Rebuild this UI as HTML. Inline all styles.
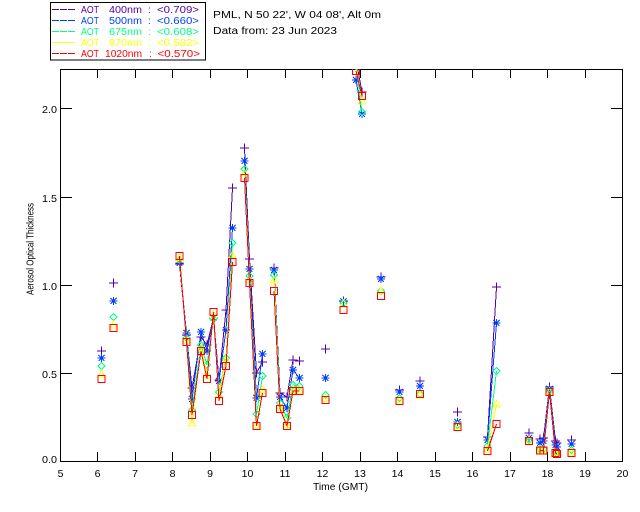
<!DOCTYPE html>
<html><head><meta charset="utf-8">
<style>
html,body{margin:0;padding:0;background:#fff;width:640px;height:512px;overflow:hidden}
svg{display:block;position:absolute;left:0;top:0}
text{font-family:"Liberation Sans",sans-serif;font-size:10px;fill:#000}
.x text{font-size:10.5px}
.d{fill:none;shape-rendering:crispEdges;stroke-width:1}
</style></head><body>
<svg width="640" height="512" viewBox="0 0 640 512">
<defs>
<clipPath id="c"><rect x="60" y="69" width="563" height="393"/></clipPath>
<marker id="mp" markerUnits="userSpaceOnUse" markerWidth="12" markerHeight="12" refX="6" refY="6" viewBox="0 0 12 12"><path d="M1.5 6H10.5M6 1.5V10.5" fill="none" stroke="#5500a0" shape-rendering="crispEdges"/></marker>
<marker id="ms" markerUnits="userSpaceOnUse" markerWidth="12" markerHeight="12" refX="6" refY="6" viewBox="0 0 12 12"><path d="M2 6H10M6 2V10M3 3L9 9M3 9L9 3" fill="none" stroke="#0040ff" shape-rendering="crispEdges"/></marker>
<marker id="md" markerUnits="userSpaceOnUse" markerWidth="12" markerHeight="12" refX="6" refY="6" viewBox="0 0 12 12"><path d="M6 2.5L9.5 6L6 9.5L2.5 6Z" fill="none" stroke="#00ff88" shape-rendering="crispEdges"/></marker>
<marker id="mt" markerUnits="userSpaceOnUse" markerWidth="12" markerHeight="12" refX="6" refY="6" viewBox="0 0 12 12"><path d="M6 2L9.5 9H2.5Z" fill="none" stroke="#ffff00" shape-rendering="crispEdges"/></marker>
<marker id="mr" markerUnits="userSpaceOnUse" markerWidth="12" markerHeight="12" refX="6" refY="6" viewBox="0 0 12 12"><rect x="2.5" y="2.5" width="7" height="7" fill="none" stroke="#ff0000" shape-rendering="crispEdges"/></marker>
</defs>

<!-- legend -->
<rect x="50.5" y="2.5" width="155" height="57.5" fill="#fff" stroke="#000" shape-rendering="crispEdges"/>
<g shape-rendering="crispEdges" stroke-dasharray="7 1" fill="none">
<path d="M52 9.5H75" stroke="#5500a0"/>
<path d="M52 20.5H75" stroke="#0040ff"/>
<path d="M52 31.5H75" stroke="#00ff88"/>
<path d="M52 42.5H75" stroke="#ffff00"/>
<path d="M52 53.5H75" stroke="#ff0000"/>
</g>
<g style="fill:#5500a0"><text style="fill:inherit" x="81" y="13" textLength="18" lengthAdjust="spacingAndGlyphs">AOT</text><text style="fill:inherit" x="109" y="13" textLength="33" lengthAdjust="spacingAndGlyphs">400nm</text><text style="fill:inherit" x="148" y="13">:</text><text style="fill:inherit" x="157" y="13" textLength="42" lengthAdjust="spacingAndGlyphs">&lt;0.709&gt;</text></g>
<g style="fill:#0040ff"><text style="fill:inherit" x="81" y="24" textLength="18" lengthAdjust="spacingAndGlyphs">AOT</text><text style="fill:inherit" x="109" y="24" textLength="33" lengthAdjust="spacingAndGlyphs">500nm</text><text style="fill:inherit" x="148" y="24">:</text><text style="fill:inherit" x="157" y="24" textLength="42" lengthAdjust="spacingAndGlyphs">&lt;0.660&gt;</text></g>
<g style="fill:#00ff88"><text style="fill:inherit" x="81" y="35" textLength="18" lengthAdjust="spacingAndGlyphs">AOT</text><text style="fill:inherit" x="109" y="35" textLength="33" lengthAdjust="spacingAndGlyphs">675nm</text><text style="fill:inherit" x="148" y="35">:</text><text style="fill:inherit" x="157" y="35" textLength="42" lengthAdjust="spacingAndGlyphs">&lt;0.608&gt;</text></g>
<g style="fill:#ffff00"><text style="fill:inherit" x="81" y="46" textLength="18" lengthAdjust="spacingAndGlyphs">AOT</text><text style="fill:inherit" x="109" y="46" textLength="33" lengthAdjust="spacingAndGlyphs">870nm</text><text style="fill:inherit" x="148" y="46">:</text><text style="fill:inherit" x="157" y="46" textLength="42" lengthAdjust="spacingAndGlyphs">&lt;0.582&gt;</text></g>
<g style="fill:#ff0000"><text style="fill:inherit" x="81" y="57" textLength="18" lengthAdjust="spacingAndGlyphs">AOT</text><text style="fill:inherit" x="105" y="57" textLength="37" lengthAdjust="spacingAndGlyphs">1020nm</text><text style="fill:inherit" x="149" y="57">:</text><text style="fill:inherit" x="157.5" y="57" textLength="42.5" lengthAdjust="spacingAndGlyphs">&lt;0.570&gt;</text></g>

<!-- header -->
<text x="213" y="18" textLength="168" lengthAdjust="spacingAndGlyphs">PML, N 50 22', W 04 08', Alt 0m</text>
<text x="213" y="34" textLength="124" lengthAdjust="spacingAndGlyphs">Data from: 23 Jun 2023</text>

<!-- axes -->
<g fill="none" stroke="#000" shape-rendering="crispEdges">
<rect x="60.5" y="69.5" width="562" height="392"/>
<path d="M97.5 70v8M135.5 70v8M172.5 70v8M210.5 70v8M247.5 70v8M285.5 70v8M322.5 70v8M360.5 70v8M397.5 70v8M435.5 70v8M472.5 70v8M510.5 70v8M547.5 70v8M585.5 70v8"/>
<path d="M97.5 461v-9M135.5 461v-9M172.5 461v-9M210.5 461v-9M247.5 461v-9M285.5 461v-9M322.5 461v-9M360.5 461v-9M397.5 461v-9M435.5 461v-9M472.5 461v-9M510.5 461v-9M547.5 461v-9M585.5 461v-9"/>
<path d="M61 108.5h11M61 197.5h11M61 285.5h11M61 373.5h11"/>
<path d="M622 108.5h-11M622 197.5h-11M622 285.5h-11M622 373.5h-11"/>
</g>

<!-- y labels -->
<g class="x">
<text x="42" y="113" textLength="15" lengthAdjust="spacingAndGlyphs">2.0</text>
<text x="42" y="202" textLength="15" lengthAdjust="spacingAndGlyphs">1.5</text>
<text x="42" y="290" textLength="15" lengthAdjust="spacingAndGlyphs">1.0</text>
<text x="42" y="378" textLength="15" lengthAdjust="spacingAndGlyphs">0.5</text>
<text x="42" y="463" textLength="15" lengthAdjust="spacingAndGlyphs">0.0</text>
</g>
<text transform="translate(33.5,249) rotate(-90)" text-anchor="middle" textLength="92" lengthAdjust="spacingAndGlyphs">Aerosol Optical Thickness</text>

<!-- x labels -->
<g class="x" text-anchor="middle">
<text x="60.5" y="477">5</text><text x="97.5" y="477">6</text><text x="135" y="477">7</text><text x="172.5" y="477">8</text><text x="210" y="477">9</text><text x="247.5" y="477">10</text><text x="285" y="477">11</text><text x="322.5" y="477">12</text><text x="360" y="477">13</text><text x="397.5" y="477">14</text><text x="435" y="477">15</text><text x="472.5" y="477">16</text><text x="510" y="477">17</text><text x="547.5" y="477">18</text><text x="585" y="477">19</text><text x="622.5" y="477">20</text>
</g>
<text x="313" y="490" textLength="55" lengthAdjust="spacingAndGlyphs">Time (GMT)</text>

<!-- data -->
<g clip-path="url(#c)">
<path class="d" stroke="#5500a0" marker-start="url(#mp)" marker-mid="url(#mp)" marker-end="url(#mp)" d="M101.5 351M113.5 283M179.5 264L186.5 335L192 388L201 337L207 345L213.5 318L219 380L226 310L232.5 188M244.5 148L249.5 259L256.5 373L262.5 362M274 268L280 393L287 397L293 360L299.5 361M325.5 349M343.5 301M356 60L362 92M381 277M399.5 390M420 381M457.5 412M487.5 437L496.5 287M529 433M540 439L543.5 438L549.5 387L555.5 441L557 443M571.5 440"/>
<path class="d" stroke="#0040ff" marker-start="url(#ms)" marker-mid="url(#ms)" marker-end="url(#ms)" d="M101.5 358M113.5 301M179.5 263L186.5 333L192 399L201 332L207 351L213.5 318L219 381L226 330L232.5 228M244.5 161L249.5 269L256.5 398L262.5 354M274 270L280 397L287 408L293 370L299.5 378M325.5 378M343.5 301.5M356 80L362 114M381 279M399.5 392M420 386M457.5 422M487.5 440L496.5 323M529 438M540 443L543.5 441L549.5 389L555.5 445L557 447M571.5 444"/>
<path class="d" stroke="#00ff88" marker-start="url(#md)" marker-mid="url(#md)" marker-end="url(#md)" d="M101.5 366M113.5 317M179.5 260L186.5 338L192 410L201 345L207 365L213.5 319L219 392L226 358L232.5 243M244.5 169L249.5 276L256.5 414L262.5 376M274 275L280 403L287 418L293 385L299.5 386M325.5 395M343.5 303M356 66L362 112M381 291M399.5 398M420 394M457.5 425M487.5 446L496.5 371M529 440M540 449L543.5 449L549.5 391L555.5 452L557 453M571.5 450"/>
<path class="d" stroke="#ffff00" marker-start="url(#mt)" marker-mid="url(#mt)" marker-end="url(#mt)" d="M101.5 374M113.5 325M179.5 258L186.5 340L192 423L201 348L207 375L213.5 315L219 395L226 359L232.5 255M244.5 173L249.5 280L256.5 425L262.5 390M274 280L280 407L287 425L293 390L299.5 390M325.5 398M343.5 304M356 64L362 101M381 291M399.5 400M420 395M457.5 426M487.5 449L496.5 404M529 441M540 450L543.5 450L549.5 392L555.5 453L557 454M571.5 452"/>
<path class="d" stroke="#ff0000" marker-start="url(#mr)" marker-mid="url(#mr)" marker-end="url(#mr)" d="M101.5 379M113.5 328M179.5 256L186.5 342L192 415L201 351L207 379L213.5 312L219 401L226 366L232.5 262M244.5 178L249.5 283L256.5 426L262.5 393M274 291L280 409L287 426L293 391L299.5 391M325.5 400M343.5 310M356 71L362 96M381 296M399.5 401M420 394M457.5 427M487.5 451L496.5 424M529 441M540 450.5L543.5 450.5L549.5 392L555.5 453L557 454M571.5 453"/>
</g>
</svg>
</body></html>
